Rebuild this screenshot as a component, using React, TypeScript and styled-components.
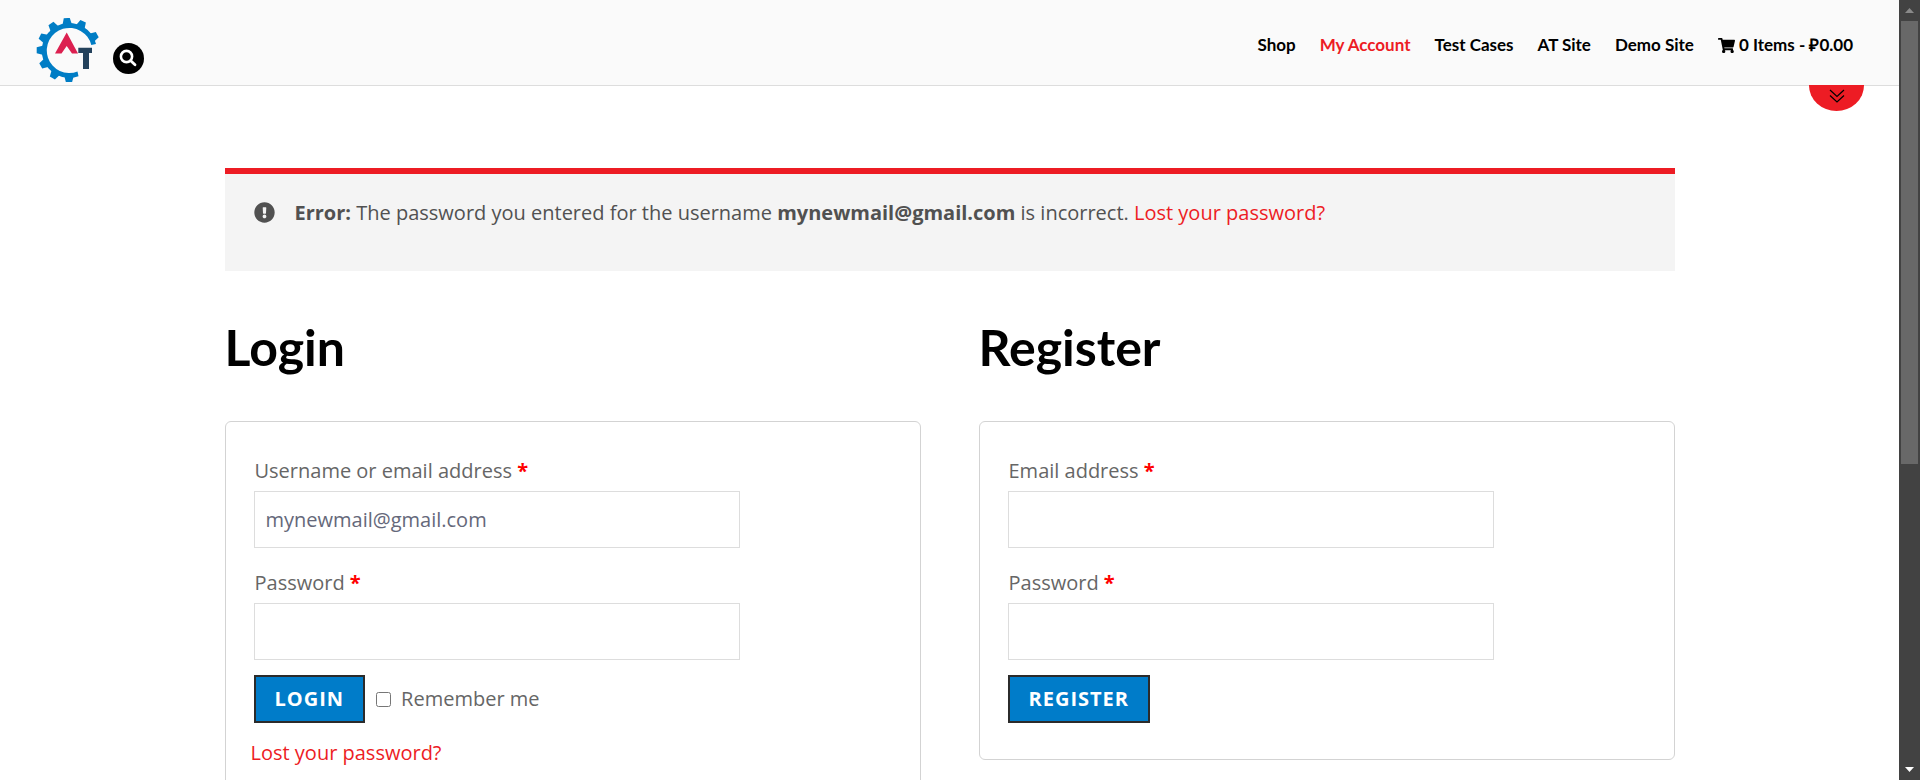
import React from 'react';
import styled, { createGlobalStyle } from 'styled-components';
import { FaShoppingCart, FaExclamationCircle } from 'react-icons/fa';

const GlobalStyle = createGlobalStyle`
  *, *::before, *::after { box-sizing: border-box; }
  body { margin: 0; background: #fff; color: #666; font: 20px/34px "Open Sans", "Noto Sans", sans-serif; }
  a { color: #ed1c24; text-decoration: none; }
`;

const Shell = styled.div`
  display: grid;
  grid-template-columns: minmax(0, 1fr) 21px;
  height: 100vh;
  overflow: hidden;
`;

const Page = styled.div`
  overflow-y: auto;
  scrollbar-width: none;
`;

const Header = styled.header`
  position: relative;
  display: flex;
  justify-content: space-between;
  align-items: flex-start;
  height: 86px;
  padding: 18px 46px 0 36px;
  background: #fafafa;
  border-bottom: 1px solid #ddd;
`;

const Brand = styled.div`
  display: flex;
  align-items: center;
  gap: 13px;
`;

const LogoLink = styled.a`
  display: flex;
`;

const SearchButton = styled.button`
  display: grid;
  place-items: center;
  width: 31px;
  height: 31px;
  margin-top: 16px;
  padding: 0;
  border: 0;
  border-radius: 50%;
  background: #000;
  color: #fff;
`;

const Nav = styled.nav`
  display: flex;
  gap: 24px;
  padding-top: 14px;
  font: 700 17px/26px Lato, "Open Sans", sans-serif;
`;

const NavLink = styled.a<{ $active?: boolean }>`
  display: flex;
  align-items: center;
  gap: 4px;
  color: ${(p) => (p.$active ? '#ed1c24' : '#000')};
`;

const TabButton = styled.button`
  position: absolute;
  top: 100%;
  right: 35px;
  display: flex;
  justify-content: center;
  align-items: flex-start;
  width: 55px;
  height: 26px;
  padding: 4px 0 0;
  border: 0;
  border-radius: 0 0 28px 28px / 0 0 26px 26px;
  background: #ed1c24;
`;

const Main = styled.main`
  max-width: 1450px;
  margin: 0 auto;
  padding: 82px 0 60px;
`;

const Notice = styled.div`
  display: flex;
  gap: 20px;
  padding: 22px 29px 41px;
  border-top: 6px solid #ed1c24;
  background: #f4f4f4;
  color: #515151;

  svg { margin-top: 6px; }
`;

const NoticeText = styled.p`
  margin: 0;
`;

const Columns = styled.div`
  display: grid;
  grid-template-columns: 1fr 1fr;
  align-items: start;
  gap: 58px;
  padding-top: 46px;
`;

const Heading = styled.h2`
  margin: 0 0 43px;
  color: #000;
  font: 700 50px/61px Lato, "Open Sans", sans-serif;
`;

const Card = styled.form`
  padding: 32px 28px 36px;
  border: 1px solid #d3d3d3;
  border-radius: 6px;
`;

const Fields = styled.div`
  display: flex;
  flex-direction: column;
  gap: 18px;
  max-width: 486px;
  margin-bottom: 15px;
`;

const Field = styled.div`
  display: flex;
  flex-direction: column;
`;

const Label = styled.label`
  padding: 0 1px 3px;
`;

const Required = styled.strong`
  color: #f00;
`;

const TextInput = styled.input`
  height: 57px;
  padding: 0 11px;
  border: 1px solid #ddd;
  border-radius: 0;
  background: #fff;
  color: #65687a;
  font: inherit;
`;

const Actions = styled.div`
  display: flex;
  align-items: center;
  gap: 11px;
`;

const SubmitButton = styled.button`
  height: 48px;
  padding: 0 19px;
  border: 2px solid #2b2b2b;
  background: #007cc9;
  color: #fff;
  font: 700 20px/30px "Open Sans", sans-serif;
  letter-spacing: 1px;
`;

const Remember = styled.label`
  display: flex;
  align-items: center;
  gap: 10px;

  input { width: 15px; height: 15px; margin: 0; }
`;

const LostPassword = styled.p`
  margin: 13px -3px 24px;
`;

const Track = styled.div`
  display: flex;
  flex-direction: column;
  align-items: center;
  height: 100vh;
  background: #424242;
`;

const ArrowBox = styled.div`
  display: grid;
  place-items: center;
  flex: 0 0 21px;
`;

const ThumbLane = styled.div`
  flex: 1;
  width: 17px;
`;

const Thumb = styled.div`
  height: 60%;
  background: #686868;
`;

const TEETH = [90, 121, 151, 180, 206, 236, 266, 296, 331];

const Logo = () => (
  <svg width="64" height="64" viewBox="0 0 64 64" role="img" aria-label="AT">
    {TEETH.map((a) => (
      <path key={a} d="M24.500 -5L32.300 -3V3L24.500 5Z" transform={`translate(33 32.300) rotate(${a})`} fill="#007dc5" />
    ))}
    <path d="M60 26A27.500 27.500 0 1 0 42.500 58.300L41.500 53.600A22.600 22.600 0 1 1 55.300 27Z" fill="#007dc5" />
    <path d="M19 35.500L30.700 14.500L42 35.500H36L30.700 28L25.500 35.500Z" fill="#dc2050" />
    <path d="M42.300 29.800H56V35H53V51H47V35H42.300Z" fill="#24425c" />
  </svg>
);

const SearchIcon = () => (
  <svg width="19" height="19" viewBox="0 0 19 19" fill="none" stroke="currentColor" strokeLinecap="round">
    <circle cx="7.500" cy="7.500" r="5.600" strokeWidth="2.600" />
    <path d="M12 12L16 15.700" strokeWidth="2.800" />
  </svg>
);

const TextField = ({ id, label, type, value }: { id: string; label: string; type: string; value?: string }) => (
  <Field>
    <Label htmlFor={id}>
      {label} <Required>*</Required>
    </Label>
    <TextInput id={id} type={type} defaultValue={value} />
  </Field>
);

export default function App() {
  return (
    <>
      <GlobalStyle />
      <Shell>
        <Page>
          <Header>
            <Brand>
              <LogoLink href="#"><Logo /></LogoLink>
              <SearchButton type="button" aria-label="Search"><SearchIcon /></SearchButton>
            </Brand>
            <Nav>
              <NavLink href="#">Shop</NavLink>
              <NavLink href="#" $active>My Account</NavLink>
              <NavLink href="#">Test Cases</NavLink>
              <NavLink href="#">AT Site</NavLink>
              <NavLink href="#">Demo Site</NavLink>
              <NavLink href="#"><FaShoppingCart size={17} />0 Items - ₽0.00</NavLink>
            </Nav>
            <TabButton type="button" aria-label="Show more">
              <svg width="16" height="14" viewBox="0 0 16 14" fill="none" stroke="#000" strokeWidth="1.200">
                <path d="M1 1L8 7.500L15 1M1 6.500L8 13L15 6.500" />
              </svg>
            </TabButton>
          </Header>
          <Main>
            <Notice role="alert">
              <FaExclamationCircle size={21} />
              <NoticeText>
                <strong>Error:</strong> The password you entered for the username <strong>mynewmail@gmail.com</strong> is
                incorrect. <a href="#">Lost your password?</a>
              </NoticeText>
            </Notice>
            <Columns>
              <section>
                <Heading>Login</Heading>
                <Card>
                  <Fields>
                    <TextField id="username" label="Username or email address" type="text" value="mynewmail@gmail.com" />
                    <TextField id="password" label="Password" type="password" />
                  </Fields>
                  <Actions>
                    <SubmitButton type="button">LOGIN</SubmitButton>
                    <Remember><input type="checkbox" />Remember me</Remember>
                  </Actions>
                  <LostPassword><a href="#">Lost your password?</a></LostPassword>
                </Card>
              </section>
              <section>
                <Heading>Register</Heading>
                <Card>
                  <Fields>
                    <TextField id="reg-email" label="Email address" type="email" />
                    <TextField id="reg-password" label="Password" type="password" />
                  </Fields>
                  <Actions>
                    <SubmitButton type="button">REGISTER</SubmitButton>
                  </Actions>
                </Card>
              </section>
            </Columns>
          </Main>
        </Page>
        <Track aria-hidden="true">
          <ArrowBox><svg width="9" height="5" viewBox="0 0 9 5"><path d="M0 5L4.500 0L9 5Z" fill="#8a8a8a" /></svg></ArrowBox>
          <ThumbLane><Thumb /></ThumbLane>
          <ArrowBox><svg width="9" height="5" viewBox="0 0 9 5"><path d="M0 0L4.500 5L9 0Z" fill="#fff" /></svg></ArrowBox>
        </Track>
      </Shell>
    </>
  );
}
